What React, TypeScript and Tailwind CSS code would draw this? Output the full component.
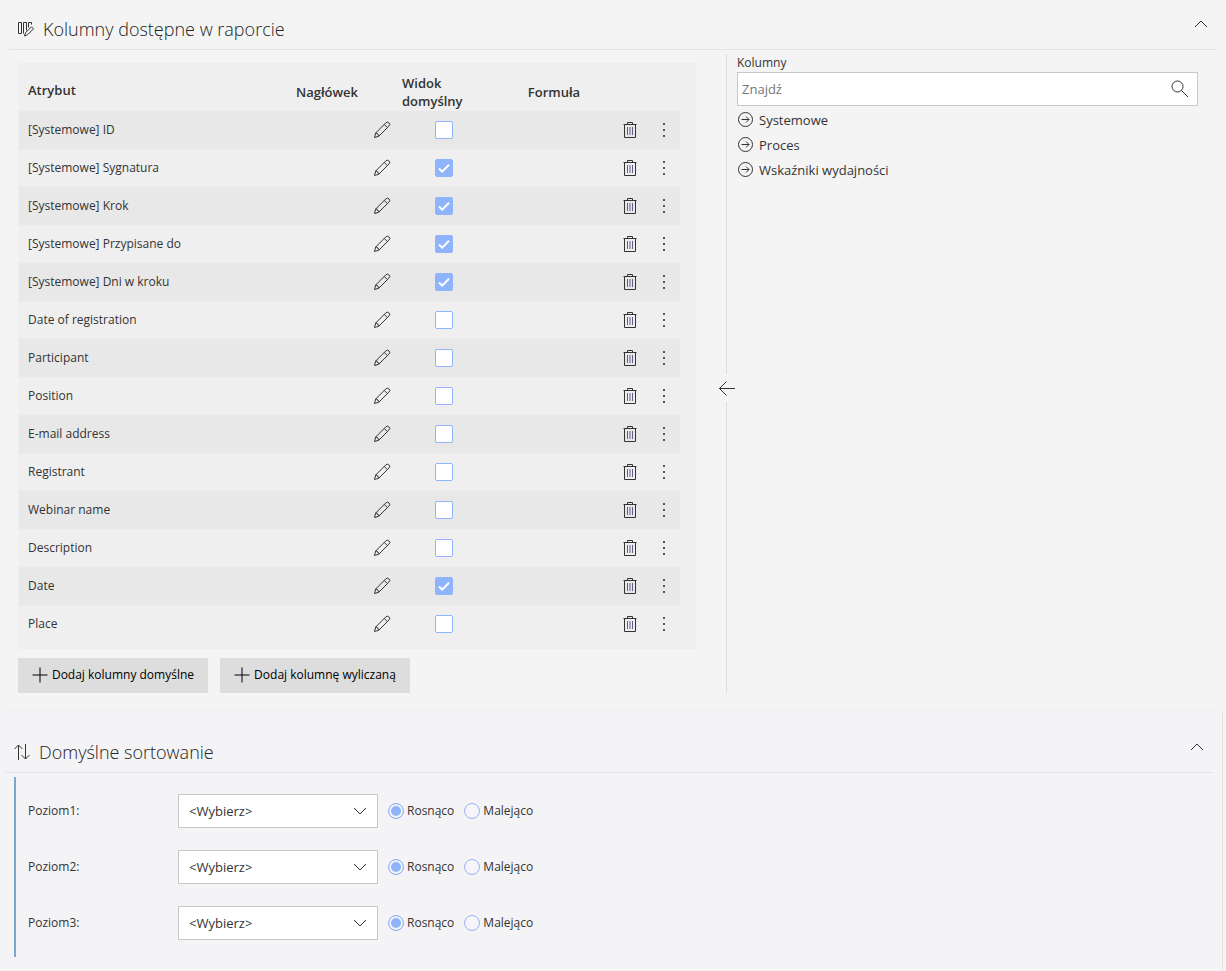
import React, { useState } from 'react';

interface Column {
    name: string;
    isDefault: boolean;
}

const initialColumns: Column[] = [
    { name: '[Systemowe] ID', isDefault: false },
    { name: '[Systemowe] Sygnatura', isDefault: true },
    { name: '[Systemowe] Krok', isDefault: true },
    { name: '[Systemowe] Przypisane do', isDefault: true },
    { name: '[Systemowe] Dni w kroku', isDefault: true },
    { name: 'Date of registration', isDefault: false },
    { name: 'Participant', isDefault: false },
    { name: 'Position', isDefault: false },
    { name: 'E-mail address', isDefault: false },
    { name: 'Registrant', isDefault: false },
    { name: 'Webinar name', isDefault: false },
    { name: 'Description', isDefault: false },
    { name: 'Date', isDefault: true },
    { name: 'Place', isDefault: false },
];

const groups = ['Systemowe', 'Proces', 'Wskaźniki wydajności'];

interface IconProps {
    size?: number;
    className?: string;
    children: React.ReactNode;
}

const Icon: React.FC<IconProps> = ({ size = 16, className, children }) => (
    <svg
        width={size}
        height={size}
        viewBox={`0 0 ${size} ${size}`}
        fill="none"
        stroke="currentColor"
        className={className}
        aria-hidden="true"
    >
        {children}
    </svg>
);

const PencilIcon = () => (
    <Icon size={18} className="text-[#333]">
        <path d="M1.5 16.5 2.7 12 12.8 1.9a2.1 2.1 0 0 1 3.1 0 2.1 2.1 0 0 1 0 3.2L5.8 15.2z" />
        <path d="M11.3 3.5l3 3M2.7 12l1.6.3.3 1.3 1.1.3.1 1.3" />
    </Icon>
);

const TrashIcon = () => (
    <Icon className="text-[#333]">
        <path d="M1.5 2.5h13M5.5 2.5v-2h5v2M2.5 2.5v13h11v-13" />
        <path d="M5.5 5v8M8 5v8M10.5 5v8" stroke="#5f5f8f" />
    </Icon>
);

const ChevronUp = () => (
    <Icon className="text-[#333]">
        <path d="M2 11l6-6 6 6" />
    </Icon>
);

interface HeaderProps {
    title: string;
    icon: React.ReactNode;
}

const SectionHeader: React.FC<HeaderProps> = ({ title, icon }) => (
    <header className="flex h-10 items-center gap-2 border-b border-[#e4e4e6] px-2 pb-0.5">
        {icon}
        <h2 className="flex-1 text-[18px] font-light text-[#222]">{title}</h2>
        <button type="button" aria-label={`Zwiń: ${title}`} className="mb-2.5">
            <ChevronUp />
        </button>
    </header>
);

const CheckBox: React.FC<{ label: string; checked: boolean; onChange: () => void }> = ({ label, checked, onChange }) => (
    <span className="grid place-items-center">
        <input
            type="checkbox"
            aria-label={label}
            checked={checked}
            onChange={onChange}
            className="col-start-1 row-start-1 size-[18px] appearance-none rounded-[2px] border border-[#8fb4fb] bg-white checked:bg-[#8fb4fb]"
        />
        {checked && (
            <Icon size={14} className="pointer-events-none col-start-1 row-start-1 text-white">
                <path d="M2 7.5l3.2 3.2L12 3.8" strokeWidth="2" />
            </Icon>
        )}
    </span>
);

const AddButton: React.FC<{ label: string }> = ({ label }) => (
    <button type="button" className="flex h-[35px] w-[190px] items-center justify-center gap-1 bg-[#ddd] pb-0.5 whitespace-nowrap text-black">
        <Icon>
            <path d="M8 .5v15M.5 8h15" />
        </Icon>
        {label}
    </button>
);

const SortLevel: React.FC<{ level: number }> = ({ level }) => {
    const [direction, setDirection] = useState('Rosnąco');
    const id = `poziom${level}`;

    return (
        <div className="flex h-[34px] items-center">
            <label htmlFor={id} className="w-[150px]">{`Poziom${level}:`}</label>
            <div className="grid w-[200px] items-center">
                <select id={id} className="col-start-1 row-start-1 h-[34px] appearance-none border border-[#c8c8c8] bg-white px-2.5 text-[13px] text-[#333]">
                    <option>{'<Wybierz>'}</option>
                </select>
                <Icon className="pointer-events-none col-start-1 row-start-1 mr-2.5 justify-self-end text-[#333]">
                    <path d="M2 5l6 6 6-6" />
                </Icon>
            </div>
            <div className="ml-2.5 flex gap-2.5">
                {['Rosnąco', 'Malejąco'].map(option => (
                    <label key={option} className="flex items-center gap-[3px]">
                        <input
                            type="radio"
                            name={`${id}-kierunek`}
                            checked={direction === option}
                            onChange={() => setDirection(option)}
                            className="size-4 appearance-none rounded-full border border-[#97b3f8] bg-[#f6f6fa] checked:bg-[#8fb4fb] checked:shadow-[inset_0_0_0_2px_#f4f4f6]"
                        />
                        {option}
                    </label>
                ))}
            </div>
        </div>
    );
};

const App: React.FC = () => {
    const [columns, setColumns] = useState<Column[]>(initialColumns);

    const toggle = (index: number) => {
        setColumns(columns.map((c, i) => (i === index ? { ...c, isDefault: !c.isDefault } : c)));
    };

    return (
        <div className="min-h-screen bg-[#f4f4f6] font-['Open_Sans','Noto_Sans',sans-serif] text-[12px] leading-[18px] text-[#333]">
            {/* Report columns */}
            <section className="rounded-b-lg border-b border-[#f0f0f2] bg-[#f4f4f4] px-[9px] pt-2.5 pb-[18px]">
                <SectionHeader
                    title="Kolumny dostępne w raporcie"
                    icon={
                        <Icon size={18} className="text-[#333]">
                            <path d="M1.5 2.5h3v11h-3zM6.5 13.5v-11h3v8M11.5 7.5v-5h3v2" />
                            <path d="M7.5 16l1-3.200 6-6 2 2-6 6z" />
                        </Icon>
                    }
                />
                <div className="grid grid-cols-[678fr_41fr_461fr] pt-1 pr-[19px] pl-[9px]">
                    <div className="pt-[9px]">
                        <div className="bg-[#efefef] pr-4 pb-1.5 pl-px">
                            <table className="w-full table-fixed">
                                <thead>
                                    <tr className="h-12 text-left text-[13px]">
                                        <th className="pt-1.5 pl-[9px] font-semibold">Atrybut</th>
                                        <th className="w-[106px] pt-2.5 pl-[9px] font-semibold">Nagłówek</th>
                                        <th className="w-[102px] pt-2.5 pl-[9px] font-semibold">Widok<br />domyślny</th>
                                        <th className="w-[118px] pt-2.5 text-center font-semibold">Formuła</th>
                                        <td className="w-[34px]" />
                                        <td className="w-[33px]" />
                                    </tr>
                                </thead>
                                <tbody>
                                    {columns.map((column, index) => (
                                        <tr key={column.name} className="h-[38px] odd:bg-[#e8e8e8]">
                                            <td className="pl-[9px]">{column.name}</td>
                                            <td className="pr-0.5">
                                                <button type="button" aria-label="Edytuj nagłówek" className="ml-auto block"><PencilIcon /></button>
                                            </td>
                                            <td>
                                                <CheckBox label={`Widok domyślny: ${column.name}`} checked={column.isDefault} onChange={() => toggle(index)} />
                                            </td>
                                            <td />
                                            <td>
                                                <button type="button" aria-label="Usuń" className="mx-auto block"><TrashIcon /></button>
                                            </td>
                                            <td>
                                                <button type="button" aria-label="Więcej" className="mx-auto block">
                                                    <Icon className="text-[#3d5a73]">
                                                        <path d="M8 1v2M8 7v2M8 13v2" strokeWidth="2" />
                                                    </Icon>
                                                </button>
                                            </td>
                                        </tr>
                                    ))}
                                </tbody>
                            </table>
                        </div>
                        <div className="mt-[9px] flex gap-3">
                            <AddButton label="Dodaj kolumny domyślne" />
                            <AddButton label="Dodaj kolumnę wyliczaną" />
                        </div>
                    </div>

                    {/* Divider with the insert arrow */}
                    <div className="ml-auto flex w-[21px] flex-col items-center">
                        <div className="w-px flex-[11] bg-[#dcdcdc]" />
                        <button type="button" aria-label="Dodaj kolumnę" className="py-1.5">
                            <Icon>
                                <path d="M0 8.5h16M7.5 1.5l-7 7 7 7" />
                            </Icon>
                        </button>
                        <div className="w-px flex-[10] bg-[#dcdcdc]" />
                    </div>

                    <div>
                        <label htmlFor="szukaj" className="block">Kolumny</label>
                        <div className="flex h-[34px] items-center border border-[#c8c8c8] bg-white pr-2">
                            <input id="szukaj" type="text" placeholder="Znajdź" className="min-w-0 flex-1 px-1 text-[13px] outline-none placeholder:text-[#767676]" />
                            <Icon size={18} className="text-[#333]">
                                <circle cx="6.5" cy="6.5" r="5.5" />
                                <path d="M10.5 10.5l6.500 6.500" />
                            </Icon>
                        </div>
                        <ul className="pt-px">
                            {groups.map(group => (
                                <li key={group} className="h-[25px]">
                                    <button type="button" className="flex h-[25px] items-center gap-[5px] text-[13px]">
                                        <Icon size={17} className="text-[#333]">
                                            <circle cx="8.5" cy="8.5" r="7" />
                                            <path d="M4.5 8.5h7.500M9 5.500l3 3-3 3" />
                                        </Icon>
                                        {group}
                                    </button>
                                </li>
                            ))}
                        </ul>
                    </div>
                </div>
            </section>

            {/* Default sorting */}
            <section className="mr-[3px] border-r border-[#e4e4e6] pt-[21px] pr-[9px] pb-3.5 pl-[5px]">
                <SectionHeader
                    title="Domyślne sortowanie"
                    icon={
                        <Icon size={18} className="text-[#333]">
                            <path d="M5.5 17v-15M1.5 6l4-4 4 4M12.5 1v15M8.5 12l4 4 4-4" />
                        </Icon>
                    }
                />
                <div className="mt-1 ml-[9px] flex flex-col gap-[22px] border-l-2 border-[#7ba7cf] py-[17px] pl-3">
                    <SortLevel level={1} />
                    <SortLevel level={2} />
                    <SortLevel level={3} />
                </div>
            </section>
        </div>
    );
};

export default App;
